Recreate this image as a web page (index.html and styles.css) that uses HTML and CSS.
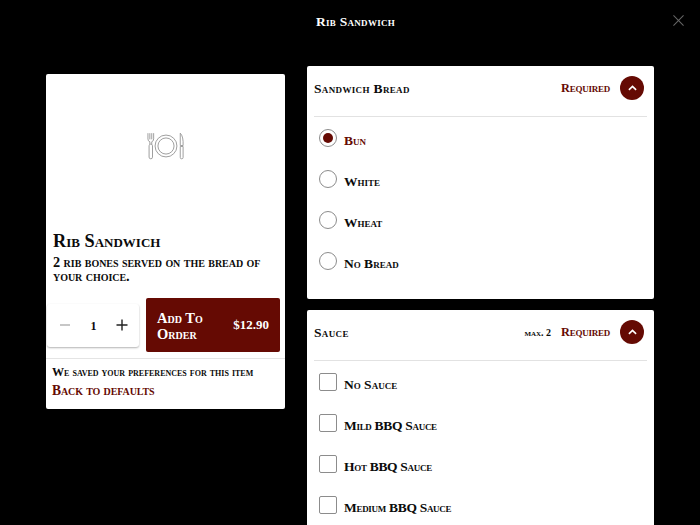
FILE: index.html
```html
<!DOCTYPE html>
<html lang="en">
<head>
<meta charset="utf-8">
<title>Rib Sandwich</title>
<link rel="stylesheet" href="styles.css">
</head>
<body>
<header class="topbar">
  <h1 class="topbar-title">Rib Sandwich</h1>
  <svg class="close" viewBox="0 0 12 12" aria-label="Close"><path d="M0.5 0.5L11.5 11.5M11.5 0.5L0.5 11.5"/></svg>
</header>
<main class="layout">
  <section class="item">
    <div class="item-image">
      <svg class="plate" viewBox="0 0 40 28">
        <path d="M1 0.5V6.5Q1 9 3 9.5V12M3 0.5V7M5 0.5V7M7 0.5V6.5Q7 9 5 9.5V12"/>
        <rect x="2.2" y="12" width="3.6" height="15.5" rx="1.8"/>
        <circle cx="20" cy="14" r="11.5"/>
        <circle cx="20" cy="14" r="8.5"/>
        <path d="M35 0.5Q38.5 4 38 13.5H35ZM35 14.5H38V26Q38 27.5 36.5 27.5T35 26Z"/>
      </svg>
    </div>
    <div class="item-info">
      <h2 class="item-name">Rib Sandwich</h2>
      <p class="item-desc">2 rib bones served on the bread of your choice.</p>
    </div>
    <div class="order-row">
      <div class="stepper">
        <svg class="step step-minus" viewBox="0 0 12 12"><path d="M1 6H11"/></svg>
        <span class="qty">1</span>
        <svg class="step step-plus" viewBox="0 0 12 12"><path d="M0.5 6H11.5M6 0.5V11.5"/></svg>
      </div>
      <button class="add" type="button"><span class="add-label">Add To Order</span><span class="add-price">$12.90</span></button>
    </div>
    <div class="prefs">
      <p class="prefs-note">We saved your preferences for this item</p>
      <a class="prefs-link">Back to defaults</a>
    </div>
  </section>
  <div class="groups">
    <section class="group">
      <div class="group-head">
        <h3 class="group-name">Sandwich Bread</h3>
        <span class="required">Required</span>
        <span class="toggle"><svg viewBox="0 0 10 6"><path d="M1 5L5 1.2L9 5"/></svg></span>
      </div>
      <ul class="options">
        <li class="option selected"><span class="radio on"></span><span class="label">Bun</span></li>
        <li class="option"><span class="radio"></span><span class="label">White</span></li>
        <li class="option"><span class="radio"></span><span class="label">Wheat</span></li>
        <li class="option"><span class="radio"></span><span class="label">No Bread</span></li>
      </ul>
    </section>
    <section class="group">
      <div class="group-head">
        <h3 class="group-name">Sauce</h3>
        <span class="max">max. 2</span>
        <span class="required">Required</span>
        <span class="toggle"><svg viewBox="0 0 10 6"><path d="M1 5L5 1.2L9 5"/></svg></span>
      </div>
      <ul class="options">
        <li class="option"><span class="check"></span><span class="label">No Sauce</span></li>
        <li class="option"><span class="check"></span><span class="label tight">Mild BBQ Sauce</span></li>
        <li class="option"><span class="check"></span><span class="label tight">Hot BBQ Sauce</span></li>
        <li class="option"><span class="check"></span><span class="label tight">Medium BBQ Sauce</span></li>
      </ul>
    </section>
  </div>
</main>
</body>
</html>
```
FILE: styles.css
```css
* { box-sizing: border-box; }
html, body { margin: 0; height: 525px; overflow: hidden; }
body {
  background: #000;
  color: #0b0b0b;
  font-family: "Liberation Serif", serif;
  font-weight: 700;
  font-variant: small-caps;
}
h1, h2, h3, p, ul { margin: 0; padding: 0; font-weight: 700; }
ul { list-style: none; }

.topbar {
  height: 43px;
  display: flex;
  align-items: center;
  justify-content: center;
  position: relative;
}
.topbar-title { color: #fff; font-size: 13.5px; line-height: 20px; letter-spacing: .3px; margin-left: 11px; }
.close {
  position: absolute;
  left: 673px;
  top: 15px;
  width: 11px;
  height: 11px;
  fill: none;
  stroke: #666;
  stroke-width: 1.1;
}

.layout {
  display: flex;
  align-items: flex-start;
  gap: 22px;
  padding: 23px 46px 0;
}

.item {
  width: 239px;
  height: 335px;
  margin-top: 8px;
  background: #fff;
  border-radius: 2px;
  flex: none;
}
.item-image {
  height: 150px;
  display: flex;
  align-items: center;
  justify-content: center;
}
.plate {
  width: 38px;
  height: 28px;
  margin-top: -6px;
  fill: none;
  stroke: #9a9a9a;
  stroke-width: 1;
}
.item-info { padding: 6px 7px 0; height: 74px; }
.item-name { font-size: 18.3px; line-height: 22px; }
.item-desc { font-size: 14.3px; line-height: 14px; letter-spacing: -.05px; margin-top: 3px; }

.order-row {
  display: flex;
  align-items: center;
  gap: 7px;
  padding-left: 1px;
  height: 54px;
}
.stepper {
  width: 92px;
  height: 43px;
  border-radius: 3px;
  box-shadow: 0 1px 2px rgba(0, 0, 0, .3);
  display: flex;
  align-items: center;
  justify-content: space-between;
  padding: 0 11px 0 12px;
}
.step { width: 12px; height: 12px; fill: none; stroke-width: 1.4; }
.step-minus { stroke: #999; stroke-width: 1.1; }
.step-plus { stroke: #222; }
.qty { font-size: 12px; padding-top: 2px; }
.add {
  width: 134px;
  height: 54px;
  border: 0;
  border-radius: 2px;
  background: #650a03;
  color: #fff;
  font: inherit;
  display: flex;
  align-items: center;
  justify-content: space-between;
  padding: 0 11px;
  text-align: left;
}
.add-label { width: 62px; font-size: 14.5px; line-height: 16px; padding-top: 1px; }
.add-price { font-size: 13px; }

.prefs {
  margin-top: 6px;
  border-top: 1px solid #e4e4e4;
  padding: 6px 6px 0;
}
.prefs-note { font-size: 12.1px; line-height: 15px; }
.prefs-link { display: block; color: #650a03; font-size: 13.6px; line-height: 18px; letter-spacing: -.1px; margin-top: 2px; }

.groups { width: 347px; display: flex; flex-direction: column; gap: 11px; flex: none; }
.group { background: #fff; border-radius: 2px; padding: 0 7px; }
.group-head {
  height: 51px;
  display: flex;
  align-items: center;
  border-bottom: 1px solid #e2e2e2;
  padding: 0 3px 6px 0;
}
.group-name { font-size: 13.5px; line-height: 20px; letter-spacing: .35px; margin: 2px auto 0 0; }
.max { font-size: 10px; margin-right: 10px; }
.required { color: #650a03; font-size: 12.3px; letter-spacing: -.25px; margin-right: 10px; }
.toggle {
  width: 24px;
  height: 24px;
  border-radius: 50%;
  background: #650a03;
  display: flex;
  align-items: center;
  justify-content: center;
}
.toggle svg { width: 9px; height: 6px; fill: none; stroke: #fff; stroke-width: 1.8; }

.options { padding: 12px 0 0 5px; }
.option { display: flex; gap: 7px; height: 41px; }
.group:first-child .options { height: 182px; }
.radio, .check { width: 18px; height: 18px; border: 1px solid #8c8c8c; background: #fff; flex: none; }
.radio { border-radius: 50%; position: relative; }
.radio.on::after {
  content: "";
  position: absolute;
  inset: 3px;
  border-radius: 50%;
  background: #650a03;
}
.check { border-radius: 2px; }
.label { font-size: 13.5px; line-height: 20px; margin-top: 2px; }
.tight { letter-spacing: -0.3px; }
.selected .label { color: #650a03; }
```
